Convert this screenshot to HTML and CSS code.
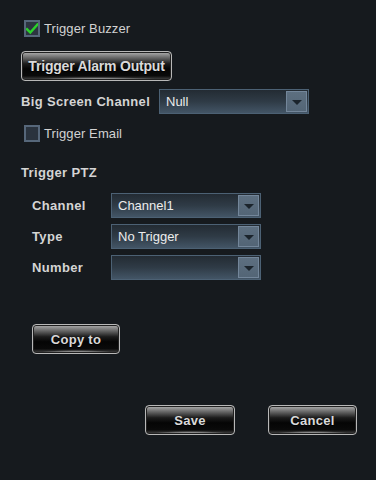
FILE: index.html
```html
<!DOCTYPE html>
<html>
<head>
<meta charset="utf-8">
<link rel="stylesheet" href="styles.css">
</head>
<body>
<div class="panel">
  <label class="check-row">
    <span class="checkbox checked">
      <svg viewBox="0 0 16 16" width="16" height="16"><path d="M3 8.2 L6.3 11.5 L13.5 3.5" fill="none" stroke="#2bd12b" stroke-width="2.4" stroke-linecap="square"/></svg>
    </span>
    <span class="check-text">Trigger Buzzer</span>
  </label>

  <button class="btn btn-alarm">Trigger Alarm Output</button>

  <div class="field-row big-row">
    <span class="label big-label">Big Screen Channel</span>
    <div class="select"><span class="select-text">Null</span><span class="arrow"></span></div>
  </div>

  <label class="check-row email-row">
    <span class="checkbox"></span>
    <span class="check-text">Trigger Email</span>
  </label>

  <div class="section-title">Trigger PTZ</div>

  <div class="ptz">
    <div class="field-row">
      <span class="label ptz-label">Channel</span>
      <div class="select"><span class="select-text">Channel1</span><span class="arrow"></span></div>
    </div>
    <div class="field-row">
      <span class="label ptz-label">Type</span>
      <div class="select"><span class="select-text">No Trigger</span><span class="arrow"></span></div>
    </div>
    <div class="field-row">
      <span class="label ptz-label">Number</span>
      <div class="select"><span class="select-text"></span><span class="arrow"></span></div>
    </div>
  </div>

  <button class="btn btn-copy">Copy to</button>

  <div class="footer">
    <button class="btn btn-save">Save</button>
    <button class="btn btn-cancel">Cancel</button>
  </div>
</div>
</body>
</html>
```

FILE: styles.css
```css
html, body {
  margin: 0;
  padding: 0;
  background: #161a1e;
  width: 376px;
  height: 480px;
  overflow: hidden;
}

.panel {
  display: flex;
  flex-direction: column;
  align-items: flex-start;
  padding: 20px 0 0 21px;
  font-family: "Liberation Sans", Arial, sans-serif;
  font-size: 13px;
  color: #d6d6d6;
}

.check-row {
  display: flex;
  align-items: center;
  height: 17px;
  margin-left: 3px;
}

.checkbox {
  box-sizing: border-box;
  width: 16px;
  height: 17px;
  border: 2px solid #56677a;
  background: #2c3540;
  display: flex;
  align-items: center;
  justify-content: center;
  overflow: hidden;
}

.checkbox svg {
  display: block;
  flex: none;
}

.check-text {
  margin-left: 4px;
  color: #d2d2d2;
  letter-spacing: 0.1px;
}

.btn {
  box-sizing: border-box;
  height: 30px;
  border: 1px solid #b8b8b8;
  border-radius: 4px;
  font-family: "Liberation Sans", Arial, sans-serif;
  font-weight: bold;
  font-size: 13px;
  color: #dadada;
  padding: 0;
  letter-spacing: 0.3px;
  background:
    radial-gradient(ellipse 45% 3px at 50% 100%, rgba(235,235,235,0.95), rgba(235,235,235,0) 100%),
    linear-gradient(to bottom, #b0b0b0 0%, #707070 18%, #1c1c1c 42%, #050505 60%, #0a0a0a 85%, #4a4a4a 100%);
  box-shadow: inset 0 0 0 1px #202020;
  text-shadow: 0 1px 0 #000;
}

.btn-alarm {
  width: 151px;
  margin-top: 14px;
  font-size: 14px;
  letter-spacing: -0.2px;
}

.field-row {
  display: flex;
  align-items: center;
  height: 25px;
}

.big-row {
  margin-top: 8px;
}

.label {
  font-weight: bold;
  color: #d4d4d4;
  letter-spacing: 0.35px;
}

.big-label {
  width: 138px;
}

.select {
  box-sizing: border-box;
  width: 150px;
  height: 25px;
  border: 1px solid #4c6174;
  background: linear-gradient(to bottom, #232b33 0%, #2f3b46 50%, #435566 100%);
  display: flex;
  align-items: center;
  justify-content: space-between;
  padding: 0 1px 0 6px;
}

.select-text {
  color: #ececec;
  font-size: 13px;
}

.arrow {
  box-sizing: border-box;
  width: 21px;
  height: 21px;
  background: linear-gradient(to bottom, #5d6f80, #536576);
  border: 1px solid #73869a;
  position: relative;
}

.arrow::after {
  content: "";
  position: absolute;
  left: 5px;
  top: 8px;
  border-left: 5px solid transparent;
  border-right: 5px solid transparent;
  border-top: 5px solid #1b242c;
}

.email-row {
  margin-top: 11px;
}

.checkbox:not(.checked) {
  background: #2a333e;
}

.section-title {
  margin-top: 22px;
  height: 17px;
  line-height: 17px;
  font-weight: bold;
  color: #d4d4d4;
  letter-spacing: 0.35px;
}

.ptz {
  display: flex;
  flex-direction: column;
  gap: 6px;
  margin-top: 12px;
  margin-left: 11px;
}

.ptz-label {
  width: 79px;
}

.btn-copy {
  width: 88px;
  margin-top: 44px;
  margin-left: 11px;
}

.footer {
  display: flex;
  gap: 33px;
  margin-top: 51px;
  margin-left: 124px;
}

.btn-save {
  width: 90px;
}

.btn-cancel {
  width: 89px;
}
```
